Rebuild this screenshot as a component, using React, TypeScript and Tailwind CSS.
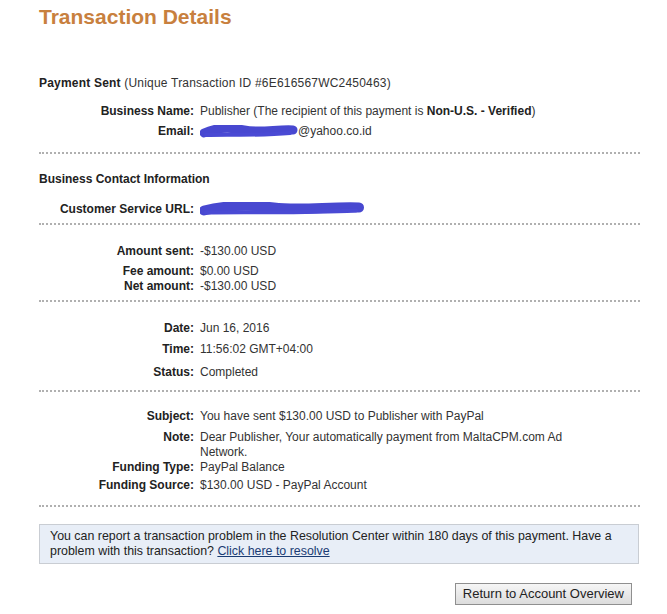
import React from 'react'

function Row({ label, children, className = '' }: { label: string; children: React.ReactNode; className?: string }) {
    return (
        <div className={`flex items-start ${className}`}>
            <div className="w-[161px] shrink-0 pr-[6px] text-right font-bold text-[#222]">{label}</div>
            <div className="w-[380px] text-[#333]">{children}</div>
        </div>
    )
}

// marker scribble covering redacted text
function Scribble({ w, h }: { w: number; h: number }) {
    const m = h / 2
    return (
        <svg width={w} height={h} viewBox={`0 0 ${w} ${h}`} className="inline-block align-middle">
            <path
                d={`M4 ${m + 1} C ${w * 0.15} ${m - 4}, ${w * 0.3} ${m - 5}, ${w * 0.45} ${m - 2} S ${w * 0.8} ${m - 3}, ${w - 5} ${m - 2}`}
                stroke="#4848d0"
                strokeWidth={h - 5}
                strokeLinecap="round"
                fill="none"
            />
            <path
                d={`M6 ${m + 3} C ${w * 0.3} ${m + 2}, ${w * 0.6} ${m + 4}, ${w - 8} ${m + 1}`}
                stroke="#4a4ad4"
                strokeWidth={4}
                strokeLinecap="round"
                fill="none"
            />
        </svg>
    )
}

function Dots() {
    return <div className="border-t-2 border-dotted border-[#b0b0b0]" />
}

export default function App() {
    return (
        <div className="w-[667px] h-[614px] bg-white pl-[39px] pr-[27px] text-[12px] leading-[15px] font-['Liberation_Sans',Arial,sans-serif]">
            <h1 className="pt-[5px] text-[21px] leading-[24px] font-bold text-[#c8803e]">Transaction Details</h1>

            <div className="mt-[47px] tracking-[0.2px]">
                <span className="font-bold text-[#222]">Payment Sent</span>{' '}
                <span className="text-[#333]">(Unique Transaction ID #6E616567WC2450463)</span>
            </div>

            <Row label="Business Name:" className="mt-[13px]">
                Publisher (The recipient of this payment is <b className="text-[#222]">Non-U.S. - Verified</b>)
            </Row>
            <Row label="Email:" className="mt-[5px]">
                <span className="inline-flex items-center">
                    <Scribble w={98} h={14} />
                    @yahoo.co.id
                </span>
            </Row>

            <div className="mt-[9px]">
                <Dots />
            </div>

            <div className="mt-[18px] font-bold text-[#222]">Business Contact Information</div>
            <Row label="Customer Service URL:" className="mt-[15px]">
                <Scribble w={164} h={15} />
            </Row>

            <div className="mt-[6px]">
                <Dots />
            </div>

            <Row label="Amount sent:" className="mt-[19px]">-$130.00 USD</Row>
            <Row label="Fee amount:" className="mt-[5px]">$0.00 USD</Row>
            <Row label="Net amount:" className="mt-0">-$130.00 USD</Row>

            <div className="mt-[6px]">
                <Dots />
            </div>

            <Row label="Date:" className="mt-[19px]">Jun 16, 2016</Row>
            <Row label="Time:" className="mt-[6px]">11:56:02 GMT+04:00</Row>
            <Row label="Status:" className="mt-[8px]">Completed</Row>

            <div className="mt-[10px]">
                <Dots />
            </div>

            <Row label="Subject:" className="mt-[17px]">You have sent $130.00 USD to Publisher with PayPal</Row>
            <Row label="Note:" className="mt-[6px]">
                Dear Publisher, Your automatically payment from MaltaCPM.com Ad Network.
            </Row>
            <Row label="Funding Type:" className="mt-0">PayPal Balance</Row>
            <Row label="Funding Source:" className="mt-[3px]">$130.00 USD - PayPal Account</Row>

            <div className="mt-[12px]">
                <Dots />
            </div>

            <div className="mt-[17px] w-[600px] border border-[#c9cdd3] bg-[#e8eef7] px-[10px] py-[4px] text-[12.4px] leading-[15px] text-[#222]">
                You can report a transaction problem in the Resolution Center within 180 days of this payment. Have a
                problem with this transaction?{' '}
                <a href="#" className="text-[#1a3c74] underline">
                    Click here to resolve
                </a>
            </div>

            <div className="mt-[19px] flex w-[593px] justify-end">
                <button className="h-[22px] border border-[#8f8f8f] bg-gradient-to-b from-[#f6f6f6] to-[#dcdcdc] px-[7px] text-[13px] text-[#222]">
                    Return to Account Overview
                </button>
            </div>
        </div>
    )
}
